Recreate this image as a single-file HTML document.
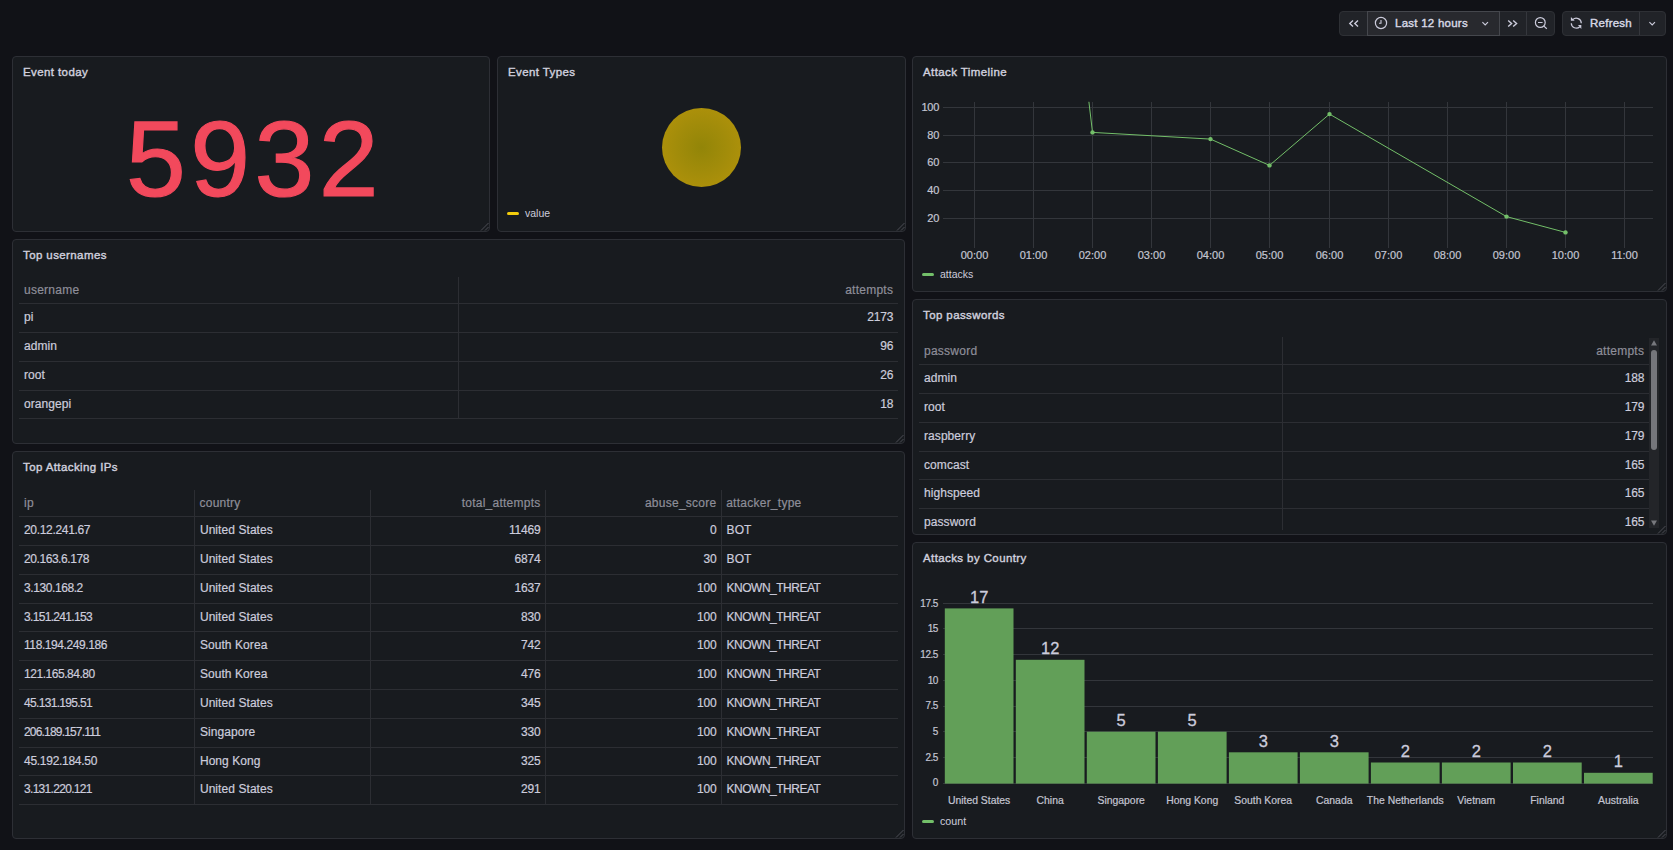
<!DOCTYPE html><html><head><meta charset="utf-8"><style>
*{box-sizing:border-box;margin:0;padding:0}
html,body{width:1673px;height:850px;overflow:hidden;background:#111217;font-family:"Liberation Sans", sans-serif;color:#ccccdc}
.p{position:absolute;background:#181b1f;border:1px solid #2d2f35;border-radius:4px}
.t{position:absolute;white-space:nowrap;line-height:1;z-index:2}
.ttl{font-weight:400;color:#d0d0de;-webkit-text-stroke:0.4px #d0d0de;letter-spacing:0.4px}
.rh{position:absolute;width:9px;height:9px}
.hl{position:absolute;height:1px;background:#2c2e33}
.vl{position:absolute;width:1px;background:#2c2e33}
.c{font-size:12px;color:#ccccdc;-webkit-text-stroke:0.2px #ccccdc;letter-spacing:0.07px}
.h{font-size:12px;color:#8e8e99;-webkit-text-stroke:0.2px #8e8e99;letter-spacing:0.25px}
.r{text-align:right}
</style></head><body>
<div style="position:absolute;left:1339px;top:11px;width:216px;height:25px;border:1px solid #2e3035;border-radius:4px;background:#212328"></div>
<div style="position:absolute;left:1367px;top:11px;width:133px;height:25px;border:1px solid #45474d;background:#28292e"></div>
<div style="position:absolute;left:1526px;top:12px;width:1px;height:23px;background:#35373d"></div>
<div style="position:absolute;left:1562px;top:11px;width:104px;height:25px;border:1px solid #2e3035;border-radius:4px;background:#212328"></div>
<div style="position:absolute;left:1639px;top:12px;width:1px;height:23px;background:#35373d"></div>

<svg style="position:absolute;left:1347px;top:17px" width="13" height="13" viewBox="0 0 13 13"><path d="M6 3.5 L2.8 6.5 L6 9.5 M11 3.5 L7.8 6.5 L11 9.5" fill="none" stroke="#ccccdc" stroke-width="1.4"/></svg>
<svg style="position:absolute;left:1374px;top:16px" width="14" height="14" viewBox="0 0 14 14"><circle cx="7" cy="7" r="5.6" fill="none" stroke="#ccccdc" stroke-width="1.2"/><path d="M7 4 V7.2 H5" fill="none" stroke="#ccccdc" stroke-width="1.1"/></svg>
<svg style="position:absolute;left:1480px;top:18px" width="10" height="10" viewBox="0 0 10 10"><path d="M2.4 4.2 L5.2 7 L8 4.2" fill="none" stroke="#ccccdc" stroke-width="1.1"/></svg>
<svg style="position:absolute;left:1506px;top:17px" width="13" height="13" viewBox="0 0 13 13"><path d="M2.2 3.5 L5.6 6.5 L2.2 9.5 M7.2 3.5 L10.6 6.5 L7.2 9.5" fill="none" stroke="#ccccdc" stroke-width="1.4"/></svg>
<svg style="position:absolute;left:1534px;top:16px" width="14" height="14" viewBox="0 0 14 14"><circle cx="6.3" cy="6.5" r="4.9" fill="none" stroke="#ccccdc" stroke-width="1.2"/><path d="M4 6.5 H8.6 M9.9 10.1 L12.8 12.8" fill="none" stroke="#ccccdc" stroke-width="1.2"/></svg>
<svg style="position:absolute;left:1566px;top:14px" width="20" height="20" viewBox="0 0 20 20"><path d="M6.76 5.66 A5 5 0 0 1 15.3 9.2 M5.3 9.2 A5 5 0 0 0 13.8 12.7" fill="none" stroke="#ccccdc" stroke-width="1.2"/><path d="M4.9 3.1 V6.8 H8.7 Z M12.0 11.1 H15.3 V15.1 Z" fill="#ccccdc"/></svg>
<svg style="position:absolute;left:1647px;top:18px" width="10" height="10" viewBox="0 0 10 10"><path d="M2.4 4.2 L5.2 7 L8 4.2" fill="none" stroke="#ccccdc" stroke-width="1.1"/></svg>

<div class="t " style="top:18.17px;font-size:11.5px;color:#d8d9e6;left:1395.00px;-webkit-text-stroke:0.4px #d8d9e6;letter-spacing:0.25px">Last 12 hours</div>
<div class="t " style="top:18.17px;font-size:11.5px;color:#d8d9e6;left:1590.00px;-webkit-text-stroke:0.4px #d8d9e6;letter-spacing:0.25px">Refresh</div>
<div class="p" style="left:12px;top:56px;width:478px;height:176px"></div>
<div class="t ttl" style="top:66.97px;font-size:11.5px;left:23.00px;">Event today</div>
<svg class="rh" style="left:480px;top:222px" width="9" height="9" viewBox="0 0 9 9"><path d="M1 8.5 L8.5 1 M5 8.5 L8.5 5" stroke="#4c4e56" stroke-width="1"/></svg>
<div class="t " style="top:105.50px;font-size:107.5px;color:#F2495C;left:126.00px;letter-spacing:4.5px;-webkit-text-stroke:1.2px #F2495C">5932</div>
<div class="p" style="left:497px;top:56px;width:409px;height:176px"></div>
<div class="t ttl" style="top:66.97px;font-size:11.5px;left:508.00px;">Event Types</div>
<svg class="rh" style="left:896px;top:222px" width="9" height="9" viewBox="0 0 9 9"><path d="M1 8.5 L8.5 1 M5 8.5 L8.5 5" stroke="#4c4e56" stroke-width="1"/></svg>
<div style="position:absolute;left:661.8px;top:107.8px;width:79.4px;height:79.4px;border-radius:50%;background:radial-gradient(circle at 50% 50%, #928508 0%, #a28c0a 45%, #b7950b 100%)"></div>
<div style="position:absolute;left:507px;top:212.2px;width:12px;height:3.2px;border-radius:1.6px;background:#F2CC0C"></div>
<div class="t " style="top:208.11px;font-size:10.5px;left:525.00px;">value</div>
<div class="p" style="left:912px;top:56px;width:755px;height:236px"></div>
<div class="t ttl" style="top:66.97px;font-size:11.5px;left:923.00px;">Attack Timeline</div>
<svg class="rh" style="left:1657px;top:282px" width="9" height="9" viewBox="0 0 9 9"><path d="M1 8.5 L8.5 1 M5 8.5 L8.5 5" stroke="#4c4e56" stroke-width="1"/></svg>
<div class="t " style="top:101.89px;font-size:11px;color:#c4c5d2;right:734.00px;-webkit-text-stroke:0.2px #c4c5d2;letter-spacing:-0.3px">100</div>
<div class="t " style="top:129.89px;font-size:11px;color:#c4c5d2;right:734.00px;-webkit-text-stroke:0.2px #c4c5d2;letter-spacing:-0.3px">80</div>
<div class="t " style="top:157.19px;font-size:11px;color:#c4c5d2;right:734.00px;-webkit-text-stroke:0.2px #c4c5d2;letter-spacing:-0.3px">60</div>
<div class="t " style="top:184.89px;font-size:11px;color:#c4c5d2;right:734.00px;-webkit-text-stroke:0.2px #c4c5d2;letter-spacing:-0.3px">40</div>
<div class="t " style="top:212.89px;font-size:11px;color:#c4c5d2;right:734.00px;-webkit-text-stroke:0.2px #c4c5d2;letter-spacing:-0.3px">20</div>
<div class="t " style="top:250.09px;font-size:11px;color:#c4c5d2;left:674.50px;width:600px;text-align:center;-webkit-text-stroke:0.2px #c4c5d2">00:00</div>
<div class="t " style="top:250.09px;font-size:11px;color:#c4c5d2;left:733.50px;width:600px;text-align:center;-webkit-text-stroke:0.2px #c4c5d2">01:00</div>
<div class="t " style="top:250.09px;font-size:11px;color:#c4c5d2;left:792.50px;width:600px;text-align:center;-webkit-text-stroke:0.2px #c4c5d2">02:00</div>
<div class="t " style="top:250.09px;font-size:11px;color:#c4c5d2;left:851.50px;width:600px;text-align:center;-webkit-text-stroke:0.2px #c4c5d2">03:00</div>
<div class="t " style="top:250.09px;font-size:11px;color:#c4c5d2;left:910.50px;width:600px;text-align:center;-webkit-text-stroke:0.2px #c4c5d2">04:00</div>
<div class="t " style="top:250.09px;font-size:11px;color:#c4c5d2;left:969.50px;width:600px;text-align:center;-webkit-text-stroke:0.2px #c4c5d2">05:00</div>
<div class="t " style="top:250.09px;font-size:11px;color:#c4c5d2;left:1029.50px;width:600px;text-align:center;-webkit-text-stroke:0.2px #c4c5d2">06:00</div>
<div class="t " style="top:250.09px;font-size:11px;color:#c4c5d2;left:1088.50px;width:600px;text-align:center;-webkit-text-stroke:0.2px #c4c5d2">07:00</div>
<div class="t " style="top:250.09px;font-size:11px;color:#c4c5d2;left:1147.50px;width:600px;text-align:center;-webkit-text-stroke:0.2px #c4c5d2">08:00</div>
<div class="t " style="top:250.09px;font-size:11px;color:#c4c5d2;left:1206.50px;width:600px;text-align:center;-webkit-text-stroke:0.2px #c4c5d2">09:00</div>
<div class="t " style="top:250.09px;font-size:11px;color:#c4c5d2;left:1265.50px;width:600px;text-align:center;-webkit-text-stroke:0.2px #c4c5d2">10:00</div>
<div class="t " style="top:250.09px;font-size:11px;color:#c4c5d2;left:1324.50px;width:600px;text-align:center;-webkit-text-stroke:0.2px #c4c5d2">11:00</div>
<div style="position:absolute;left:922px;top:273.1px;width:12px;height:3.2px;border-radius:1.6px;background:#73BF69"></div>
<div class="t " style="top:269.11px;font-size:10.5px;left:940.00px;">attacks</div>
<div class="p" style="left:12px;top:239px;width:893px;height:205px"></div>
<div class="t ttl" style="top:249.97px;font-size:11.5px;left:23.00px;">Top usernames</div>
<svg class="rh" style="left:895px;top:434px" width="9" height="9" viewBox="0 0 9 9"><path d="M1 8.5 L8.5 1 M5 8.5 L8.5 5" stroke="#4c4e56" stroke-width="1"/></svg>
<div class="hl" style="left:19px;top:303px;width:879px"></div>
<div class="hl" style="left:19px;top:332px;width:879px"></div>
<div class="hl" style="left:19px;top:361px;width:879px"></div>
<div class="hl" style="left:19px;top:390px;width:879px"></div>
<div class="hl" style="left:19px;top:418px;width:879px"></div>
<div class="vl" style="left:458px;top:277px;height:142px"></div>
<div class="t h" style="top:283.84px;font-size:12px;left:24.00px;">username</div>
<div class="t h" style="top:283.84px;font-size:12px;right:779.80px;">attempts</div>
<div class="t c" style="top:310.84px;font-size:12px;left:24.00px;">pi</div>
<div class="t c" style="top:310.84px;font-size:12px;right:779.80px;letter-spacing:-0.2px">2173</div>
<div class="t c" style="top:339.84px;font-size:12px;left:24.00px;">admin</div>
<div class="t c" style="top:339.84px;font-size:12px;right:779.80px;letter-spacing:-0.2px">96</div>
<div class="t c" style="top:368.84px;font-size:12px;left:24.00px;">root</div>
<div class="t c" style="top:368.84px;font-size:12px;right:779.80px;letter-spacing:-0.2px">26</div>
<div class="t c" style="top:397.84px;font-size:12px;left:24.00px;">orangepi</div>
<div class="t c" style="top:397.84px;font-size:12px;right:779.80px;letter-spacing:-0.2px">18</div>
<div class="p" style="left:12px;top:451px;width:893px;height:388px"></div>
<div class="t ttl" style="top:461.97px;font-size:11.5px;left:23.00px;">Top Attacking IPs</div>
<svg class="rh" style="left:895px;top:829px" width="9" height="9" viewBox="0 0 9 9"><path d="M1 8.5 L8.5 1 M5 8.5 L8.5 5" stroke="#4c4e56" stroke-width="1"/></svg>
<div class="hl" style="left:19px;top:516px;width:879px"></div>
<div class="hl" style="left:19px;top:545px;width:879px"></div>
<div class="hl" style="left:19px;top:574px;width:879px"></div>
<div class="hl" style="left:19px;top:603px;width:879px"></div>
<div class="hl" style="left:19px;top:631px;width:879px"></div>
<div class="hl" style="left:19px;top:660px;width:879px"></div>
<div class="hl" style="left:19px;top:689px;width:879px"></div>
<div class="hl" style="left:19px;top:718px;width:879px"></div>
<div class="hl" style="left:19px;top:747px;width:879px"></div>
<div class="hl" style="left:19px;top:775px;width:879px"></div>
<div class="hl" style="left:19px;top:804px;width:879px"></div>
<div class="vl" style="left:194px;top:490px;height:315px"></div>
<div class="vl" style="left:370px;top:490px;height:315px"></div>
<div class="vl" style="left:545px;top:490px;height:315px"></div>
<div class="vl" style="left:721px;top:490px;height:315px"></div>
<div class="t h" style="top:496.84px;font-size:12px;left:24.00px;">ip</div>
<div class="t h" style="top:496.84px;font-size:12px;left:199.50px;">country</div>
<div class="t h" style="top:496.84px;font-size:12px;right:1132.50px;">total_attempts</div>
<div class="t h" style="top:496.84px;font-size:12px;right:956.60px;">abuse_score</div>
<div class="t h" style="top:496.84px;font-size:12px;left:726.20px;">attacker_type</div>
<div class="t c" style="top:523.84px;font-size:12px;left:24.00px;letter-spacing:-0.32px">20.12.241.67</div>
<div class="t c" style="top:523.84px;font-size:12px;left:199.90px;">United States</div>
<div class="t c" style="top:523.84px;font-size:12px;right:1132.50px;letter-spacing:-0.2px">11469</div>
<div class="t c" style="top:523.84px;font-size:12px;right:956.60px;letter-spacing:-0.2px">0</div>
<div class="t c" style="top:523.84px;font-size:12px;left:726.60px;">BOT</div>
<div class="t c" style="top:552.84px;font-size:12px;left:24.00px;letter-spacing:-0.43px">20.163.6.178</div>
<div class="t c" style="top:552.84px;font-size:12px;left:199.90px;">United States</div>
<div class="t c" style="top:552.84px;font-size:12px;right:1132.50px;letter-spacing:-0.2px">6874</div>
<div class="t c" style="top:552.84px;font-size:12px;right:956.60px;letter-spacing:-0.2px">30</div>
<div class="t c" style="top:552.84px;font-size:12px;left:726.60px;">BOT</div>
<div class="t c" style="top:581.84px;font-size:12px;left:24.00px;letter-spacing:-0.41px">3.130.168.2</div>
<div class="t c" style="top:581.84px;font-size:12px;left:199.90px;">United States</div>
<div class="t c" style="top:581.84px;font-size:12px;right:1132.50px;letter-spacing:-0.2px">1637</div>
<div class="t c" style="top:581.84px;font-size:12px;right:956.60px;letter-spacing:-0.2px">100</div>
<div class="t c" style="top:581.84px;font-size:12px;left:726.60px;letter-spacing:-0.5px">KNOWN_THREAT</div>
<div class="t c" style="top:610.84px;font-size:12px;left:24.00px;letter-spacing:-0.67px">3.151.241.153</div>
<div class="t c" style="top:610.84px;font-size:12px;left:199.90px;">United States</div>
<div class="t c" style="top:610.84px;font-size:12px;right:1132.50px;letter-spacing:-0.2px">830</div>
<div class="t c" style="top:610.84px;font-size:12px;right:956.60px;letter-spacing:-0.2px">100</div>
<div class="t c" style="top:610.84px;font-size:12px;left:726.60px;letter-spacing:-0.5px">KNOWN_THREAT</div>
<div class="t c" style="top:638.84px;font-size:12px;left:24.00px;letter-spacing:-0.41px">118.194.249.186</div>
<div class="t c" style="top:638.84px;font-size:12px;left:199.90px;">South Korea</div>
<div class="t c" style="top:638.84px;font-size:12px;right:1132.50px;letter-spacing:-0.2px">742</div>
<div class="t c" style="top:638.84px;font-size:12px;right:956.60px;letter-spacing:-0.2px">100</div>
<div class="t c" style="top:638.84px;font-size:12px;left:726.60px;letter-spacing:-0.5px">KNOWN_THREAT</div>
<div class="t c" style="top:667.84px;font-size:12px;left:24.00px;letter-spacing:-0.46px">121.165.84.80</div>
<div class="t c" style="top:667.84px;font-size:12px;left:199.90px;">South Korea</div>
<div class="t c" style="top:667.84px;font-size:12px;right:1132.50px;letter-spacing:-0.2px">476</div>
<div class="t c" style="top:667.84px;font-size:12px;right:956.60px;letter-spacing:-0.2px">100</div>
<div class="t c" style="top:667.84px;font-size:12px;left:726.60px;letter-spacing:-0.5px">KNOWN_THREAT</div>
<div class="t c" style="top:696.84px;font-size:12px;left:24.00px;letter-spacing:-0.67px">45.131.195.51</div>
<div class="t c" style="top:696.84px;font-size:12px;left:199.90px;">United States</div>
<div class="t c" style="top:696.84px;font-size:12px;right:1132.50px;letter-spacing:-0.2px">345</div>
<div class="t c" style="top:696.84px;font-size:12px;right:956.60px;letter-spacing:-0.2px">100</div>
<div class="t c" style="top:696.84px;font-size:12px;left:726.60px;letter-spacing:-0.5px">KNOWN_THREAT</div>
<div class="t c" style="top:725.84px;font-size:12px;left:24.00px;letter-spacing:-0.82px">206.189.157.111</div>
<div class="t c" style="top:725.84px;font-size:12px;left:199.90px;">Singapore</div>
<div class="t c" style="top:725.84px;font-size:12px;right:1132.50px;letter-spacing:-0.2px">330</div>
<div class="t c" style="top:725.84px;font-size:12px;right:956.60px;letter-spacing:-0.2px">100</div>
<div class="t c" style="top:725.84px;font-size:12px;left:726.60px;letter-spacing:-0.5px">KNOWN_THREAT</div>
<div class="t c" style="top:754.84px;font-size:12px;left:24.00px;letter-spacing:-0.28px">45.192.184.50</div>
<div class="t c" style="top:754.84px;font-size:12px;left:199.90px;">Hong Kong</div>
<div class="t c" style="top:754.84px;font-size:12px;right:1132.50px;letter-spacing:-0.2px">325</div>
<div class="t c" style="top:754.84px;font-size:12px;right:956.60px;letter-spacing:-0.2px">100</div>
<div class="t c" style="top:754.84px;font-size:12px;left:726.60px;letter-spacing:-0.5px">KNOWN_THREAT</div>
<div class="t c" style="top:782.84px;font-size:12px;left:24.00px;letter-spacing:-0.69px">3.131.220.121</div>
<div class="t c" style="top:782.84px;font-size:12px;left:199.90px;">United States</div>
<div class="t c" style="top:782.84px;font-size:12px;right:1132.50px;letter-spacing:-0.2px">291</div>
<div class="t c" style="top:782.84px;font-size:12px;right:956.60px;letter-spacing:-0.2px">100</div>
<div class="t c" style="top:782.84px;font-size:12px;left:726.60px;letter-spacing:-0.5px">KNOWN_THREAT</div>
<div class="p" style="left:912px;top:299px;width:755px;height:236px"></div>
<div class="t ttl" style="top:309.97px;font-size:11.5px;left:923.00px;">Top passwords</div>
<svg class="rh" style="left:1657px;top:525px" width="9" height="9" viewBox="0 0 9 9"><path d="M1 8.5 L8.5 1 M5 8.5 L8.5 5" stroke="#4c4e56" stroke-width="1"/></svg>
<div class="hl" style="left:919px;top:364px;width:730px"></div>
<div class="hl" style="left:919px;top:393px;width:730px"></div>
<div class="hl" style="left:919px;top:422px;width:730px"></div>
<div class="hl" style="left:919px;top:451px;width:730px"></div>
<div class="hl" style="left:919px;top:479px;width:730px"></div>
<div class="hl" style="left:919px;top:508px;width:730px"></div>
<div class="vl" style="left:1282px;top:337px;height:193px"></div>
<div class="t h" style="top:344.84px;font-size:12px;left:924.00px;">password</div>
<div class="t h" style="top:344.84px;font-size:12px;right:28.80px;">attempts</div>
<div class="t c" style="top:371.84px;font-size:12px;left:924.00px;">admin</div>
<div class="t c" style="top:371.84px;font-size:12px;right:28.80px;letter-spacing:-0.2px">188</div>
<div class="t c" style="top:400.84px;font-size:12px;left:924.00px;">root</div>
<div class="t c" style="top:400.84px;font-size:12px;right:28.80px;letter-spacing:-0.2px">179</div>
<div class="t c" style="top:429.84px;font-size:12px;left:924.00px;">raspberry</div>
<div class="t c" style="top:429.84px;font-size:12px;right:28.80px;letter-spacing:-0.2px">179</div>
<div class="t c" style="top:458.84px;font-size:12px;left:924.00px;">comcast</div>
<div class="t c" style="top:458.84px;font-size:12px;right:28.80px;letter-spacing:-0.2px">165</div>
<div class="t c" style="top:486.84px;font-size:12px;left:924.00px;">highspeed</div>
<div class="t c" style="top:486.84px;font-size:12px;right:28.80px;letter-spacing:-0.2px">165</div>
<div class="t c" style="top:515.84px;font-size:12px;left:924.00px;">password</div>
<div class="t c" style="top:515.84px;font-size:12px;right:28.80px;letter-spacing:-0.2px">165</div>
<div style="position:absolute;left:1649px;top:338px;width:10px;height:190px;background:#232529;z-index:1"></div>
<div style="position:absolute;left:1651px;top:350px;width:6px;height:100px;border-radius:3px;background:#75767b;z-index:1"></div>
<svg style="position:absolute;left:1649px;top:339px;z-index:1" width="10" height="8"><path d="M2 6.5 L5 1.3 L8 6.5Z" fill="#77787d"/></svg>
<svg style="position:absolute;left:1649px;top:519px;z-index:1" width="10" height="8"><path d="M2 1.5 L5 6.7 L8 1.5Z" fill="#77787d"/></svg>
<div class="p" style="left:912px;top:542px;width:755px;height:297px"></div>
<div class="t ttl" style="top:552.97px;font-size:11.5px;left:923.00px;">Attacks by Country</div>
<svg class="rh" style="left:1657px;top:829px" width="9" height="9" viewBox="0 0 9 9"><path d="M1 8.5 L8.5 1 M5 8.5 L8.5 5" stroke="#4c4e56" stroke-width="1"/></svg>
<div class="t " style="top:778.43px;font-size:10px;color:#c4c5d2;right:735.20px;letter-spacing:-0.5px;-webkit-text-stroke:0.2px #c4c5d2">0</div>
<div class="t " style="top:752.74px;font-size:10px;color:#c4c5d2;right:735.20px;letter-spacing:-0.5px;-webkit-text-stroke:0.2px #c4c5d2">2.5</div>
<div class="t " style="top:727.05px;font-size:10px;color:#c4c5d2;right:735.20px;letter-spacing:-0.5px;-webkit-text-stroke:0.2px #c4c5d2">5</div>
<div class="t " style="top:701.36px;font-size:10px;color:#c4c5d2;right:735.20px;letter-spacing:-0.5px;-webkit-text-stroke:0.2px #c4c5d2">7.5</div>
<div class="t " style="top:675.67px;font-size:10px;color:#c4c5d2;right:735.20px;letter-spacing:-0.5px;-webkit-text-stroke:0.2px #c4c5d2">10</div>
<div class="t " style="top:649.98px;font-size:10px;color:#c4c5d2;right:735.20px;letter-spacing:-0.5px;-webkit-text-stroke:0.2px #c4c5d2">12.5</div>
<div class="t " style="top:624.29px;font-size:10px;color:#c4c5d2;right:735.20px;letter-spacing:-0.5px;-webkit-text-stroke:0.2px #c4c5d2">15</div>
<div class="t " style="top:598.60px;font-size:10px;color:#c4c5d2;right:735.20px;letter-spacing:-0.5px;-webkit-text-stroke:0.2px #c4c5d2">17.5</div>
<div class="t " style="top:589.04px;font-size:16.5px;color:#ccccdc;left:679.15px;width:600px;text-align:center;-webkit-text-stroke:0.3px #ccccdc">17</div>
<div class="t " style="top:795.80px;font-size:10.4px;color:#c4c5d2;left:679.15px;width:600px;text-align:center;-webkit-text-stroke:0.2px #c4c5d2">United States</div>
<div class="t " style="top:640.42px;font-size:16.5px;color:#ccccdc;left:750.17px;width:600px;text-align:center;-webkit-text-stroke:0.3px #ccccdc">12</div>
<div class="t " style="top:795.80px;font-size:10.4px;color:#c4c5d2;left:750.17px;width:600px;text-align:center;-webkit-text-stroke:0.2px #c4c5d2">China</div>
<div class="t " style="top:712.35px;font-size:16.5px;color:#ccccdc;left:821.19px;width:600px;text-align:center;-webkit-text-stroke:0.3px #ccccdc">5</div>
<div class="t " style="top:795.80px;font-size:10.4px;color:#c4c5d2;left:821.19px;width:600px;text-align:center;-webkit-text-stroke:0.2px #c4c5d2">Singapore</div>
<div class="t " style="top:712.35px;font-size:16.5px;color:#ccccdc;left:892.21px;width:600px;text-align:center;-webkit-text-stroke:0.3px #ccccdc">5</div>
<div class="t " style="top:795.80px;font-size:10.4px;color:#c4c5d2;left:892.21px;width:600px;text-align:center;-webkit-text-stroke:0.2px #c4c5d2">Hong Kong</div>
<div class="t " style="top:732.90px;font-size:16.5px;color:#ccccdc;left:963.23px;width:600px;text-align:center;-webkit-text-stroke:0.3px #ccccdc">3</div>
<div class="t " style="top:795.80px;font-size:10.4px;color:#c4c5d2;left:963.23px;width:600px;text-align:center;-webkit-text-stroke:0.2px #c4c5d2">South Korea</div>
<div class="t " style="top:732.90px;font-size:16.5px;color:#ccccdc;left:1034.25px;width:600px;text-align:center;-webkit-text-stroke:0.3px #ccccdc">3</div>
<div class="t " style="top:795.80px;font-size:10.4px;color:#c4c5d2;left:1034.25px;width:600px;text-align:center;-webkit-text-stroke:0.2px #c4c5d2">Canada</div>
<div class="t " style="top:743.18px;font-size:16.5px;color:#ccccdc;left:1105.27px;width:600px;text-align:center;-webkit-text-stroke:0.3px #ccccdc">2</div>
<div class="t " style="top:795.80px;font-size:10.4px;color:#c4c5d2;left:1105.27px;width:600px;text-align:center;-webkit-text-stroke:0.2px #c4c5d2">The Netherlands</div>
<div class="t " style="top:743.18px;font-size:16.5px;color:#ccccdc;left:1176.29px;width:600px;text-align:center;-webkit-text-stroke:0.3px #ccccdc">2</div>
<div class="t " style="top:795.80px;font-size:10.4px;color:#c4c5d2;left:1176.29px;width:600px;text-align:center;-webkit-text-stroke:0.2px #c4c5d2">Vietnam</div>
<div class="t " style="top:743.18px;font-size:16.5px;color:#ccccdc;left:1247.31px;width:600px;text-align:center;-webkit-text-stroke:0.3px #ccccdc">2</div>
<div class="t " style="top:795.80px;font-size:10.4px;color:#c4c5d2;left:1247.31px;width:600px;text-align:center;-webkit-text-stroke:0.2px #c4c5d2">Finland</div>
<div class="t " style="top:753.46px;font-size:16.5px;color:#ccccdc;left:1318.33px;width:600px;text-align:center;-webkit-text-stroke:0.3px #ccccdc">1</div>
<div class="t " style="top:795.80px;font-size:10.4px;color:#c4c5d2;left:1318.33px;width:600px;text-align:center;-webkit-text-stroke:0.2px #c4c5d2">Australia</div>
<div style="position:absolute;left:922px;top:819.9px;width:12px;height:3.2px;border-radius:1.6px;background:#73BF69"></div>
<div class="t " style="top:815.94px;font-size:10.7px;left:940.00px;">count</div>
<svg style="position:absolute;left:0;top:0;z-index:1" width="1673" height="850">
<rect x="943" y="107" width="710" height="1" fill="#33363b"/>
<rect x="943" y="135" width="710" height="1" fill="#33363b"/>
<rect x="943" y="162" width="710" height="1" fill="#33363b"/>
<rect x="943" y="190" width="710" height="1" fill="#33363b"/>
<rect x="943" y="218" width="710" height="1" fill="#33363b"/>
<rect x="974" y="102" width="1" height="146" fill="#33363b"/>
<rect x="1033" y="102" width="1" height="146" fill="#33363b"/>
<rect x="1092" y="102" width="1" height="146" fill="#33363b"/>
<rect x="1151" y="102" width="1" height="146" fill="#33363b"/>
<rect x="1210" y="102" width="1" height="146" fill="#33363b"/>
<rect x="1269" y="102" width="1" height="146" fill="#33363b"/>
<rect x="1329" y="102" width="1" height="146" fill="#33363b"/>
<rect x="1388" y="102" width="1" height="146" fill="#33363b"/>
<rect x="1447" y="102" width="1" height="146" fill="#33363b"/>
<rect x="1506" y="102" width="1" height="146" fill="#33363b"/>
<rect x="1565" y="102" width="1" height="146" fill="#33363b"/>
<rect x="1624" y="102" width="1" height="146" fill="#33363b"/>
<polyline fill="none" stroke="#73BF69" stroke-width="1" points="1088.9,101.8 1092.5,132.4 1210.5,139.1 1269.5,165.4 1329.5,114.1 1506.5,216.6 1565.5,232.4"/>
<circle cx="1092.5" cy="132.4" r="2.2" fill="#73BF69"/>
<circle cx="1210.5" cy="139.1" r="2.2" fill="#73BF69"/>
<circle cx="1269.5" cy="165.4" r="2.2" fill="#73BF69"/>
<circle cx="1329.5" cy="114.1" r="2.2" fill="#73BF69"/>
<circle cx="1506.5" cy="216.6" r="2.2" fill="#73BF69"/>
<circle cx="1565.5" cy="232.4" r="2.2" fill="#73BF69"/>
<rect x="943" y="783" width="710" height="1" fill="#33363b"/>
<rect x="943" y="757" width="710" height="1" fill="#33363b"/>
<rect x="943" y="731" width="710" height="1" fill="#33363b"/>
<rect x="943" y="706" width="710" height="1" fill="#33363b"/>
<rect x="943" y="680" width="710" height="1" fill="#33363b"/>
<rect x="943" y="654" width="710" height="1" fill="#33363b"/>
<rect x="943" y="628" width="710" height="1" fill="#33363b"/>
<rect x="943" y="603" width="710" height="1" fill="#33363b"/>
<rect x="944.8" y="608.4" width="68.7" height="175.2" fill="#629f58"/>
<rect x="1015.8" y="659.8" width="68.7" height="123.8" fill="#629f58"/>
<rect x="1086.8" y="731.7" width="68.7" height="51.9" fill="#629f58"/>
<rect x="1157.9" y="731.7" width="68.7" height="51.9" fill="#629f58"/>
<rect x="1228.9" y="752.3" width="68.7" height="31.3" fill="#629f58"/>
<rect x="1299.9" y="752.3" width="68.7" height="31.3" fill="#629f58"/>
<rect x="1370.9" y="762.5" width="68.7" height="21.1" fill="#629f58"/>
<rect x="1441.9" y="762.5" width="68.7" height="21.1" fill="#629f58"/>
<rect x="1513.0" y="762.5" width="68.7" height="21.1" fill="#629f58"/>
<rect x="1584.0" y="772.8" width="68.7" height="10.8" fill="#629f58"/>
</svg>
</body></html>
